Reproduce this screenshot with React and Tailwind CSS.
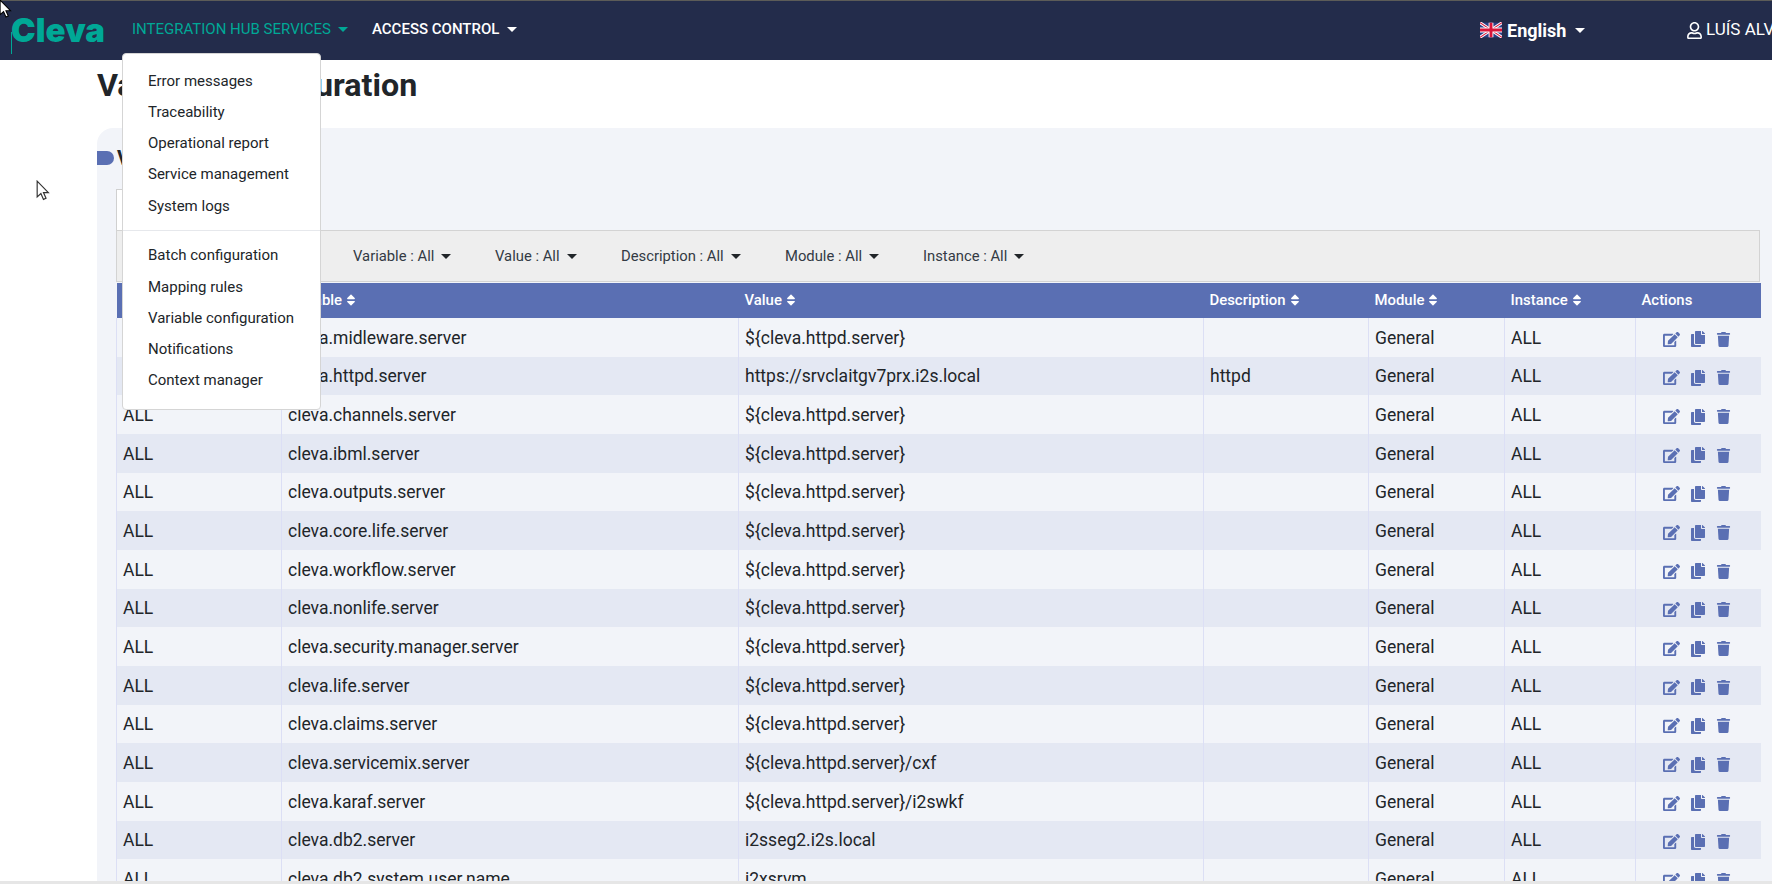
import React from 'react';
import { FaEdit, FaCopy, FaTrash, FaSort, FaRegUser } from 'react-icons/fa';

const httpd = '${cleva.httpd.server}';

const rows = [
  ['cleva.midleware.server', httpd, ''],
  ['cleva.httpd.server', 'https://srvclaitgv7prx.i2s.local', 'httpd'],
  ['cleva.channels.server', httpd, ''],
  ['cleva.ibml.server', httpd, ''],
  ['cleva.outputs.server', httpd, ''],
  ['cleva.core.life.server', httpd, ''],
  ['cleva.workflow.server', httpd, ''],
  ['cleva.nonlife.server', httpd, ''],
  ['cleva.security.manager.server', httpd, ''],
  ['cleva.life.server', httpd, ''],
  ['cleva.claims.server', httpd, ''],
  ['cleva.servicemix.server', httpd + '/cxf', ''],
  ['cleva.karaf.server', httpd + '/i2swkf', ''],
  ['cleva.db2.server', 'i2sseg2.i2s.local', ''],
  ['cleva.db2.system.user.name', 'i2xsrvm', ''],
];

const Caret = ({ className = 'border-t-white' }) => (
  <span className={`inline-block w-0 h-0 border-x-[5px] border-x-transparent border-t-[5px] ${className}`} />
);

const MenuItem = ({ children, className = 'h-[31px]' }) => (
  <div className={`flex items-center pl-[25px] text-[15px] text-[#212529] ${className}`}>{children}</div>
);

const Filter = ({ label, className }) => (
  <div className={`flex items-center gap-[7px] pt-[1px] text-[14.8px] text-[#333a44] ${className}`}>
    <span>{label} : All</span>
    <Caret className="border-t-[#212529]" />
  </div>
);

const Head = ({ label, sort = true }) => (
  <th className="px-[6px] text-left text-[14.9px] font-medium text-white">
    <span className="inline-flex items-center gap-[2px]">
      {label}
      {sort && <FaSort className="text-[14px]" />}
    </span>
  </th>
);

const Cell = ({ children }) => (
  <td className="px-[6px] pt-[1px] border-l border-[#dcdff5] text-[17.5px] text-[#212529] whitespace-nowrap">{children}</td>
);

const UkFlag = () => (
  <svg width="22" height="16" viewBox="0 0 60 40">
    <rect width="60" height="40" fill="#2b3f86" />
    <path d="M0 0L60 40M60 0L0 40" stroke="#fff" strokeWidth="8" />
    <path d="M0 0L60 40M60 0L0 40" stroke="#d8153a" strokeWidth="3" />
    <path d="M30 0V40M0 20H60" stroke="#fff" strokeWidth="13" />
    <path d="M30 0V40M0 20H60" stroke="#d8153a" strokeWidth="8" />
  </svg>
);

const Pointer = ({ className, fill, stroke, size }) => (
  <svg className={className} width={size} height={size * 1.5} viewBox="0 0 12 18">
    <path d="M1 1V14.5L4.2 11.6L6.4 16.6L8.6 15.6L6.4 10.8H10.6Z" fill={fill} stroke={stroke} strokeWidth="1" />
  </svg>
);

export default function App() {
  return (
    <div className="relative h-[884px] overflow-hidden bg-white font-['Roboto',sans-serif]">
      <nav className="flex h-[60px] items-center border-t border-[#5c5c58] bg-[#232c4b] pl-[11px] text-white whitespace-nowrap">
        <div className="flex w-[1469px] shrink-0 items-center">
          <div className="relative w-[121px] text-[33px] leading-none font-black text-[#00a896] font-['Inter',sans-serif]">
            Cleva
            <span className="absolute left-0 top-[18px] h-[22px] w-px bg-[#00a896]" />
          </div>
          <div className="flex items-center gap-[7px] pb-[3px] text-[15px] text-[#00a896]">
            <span>INTEGRATION HUB SERVICES</span>
            <Caret className="border-t-[#00a896]" />
          </div>
          <div className="ml-[24px] flex items-center gap-[8px] pb-[3px] text-[15px] font-medium">
            <span>ACCESS CONTROL</span>
            <Caret />
          </div>
        </div>
        <div className="flex w-[206px] shrink-0 items-center gap-[5px] pb-[1px]">
          <UkFlag />
          <span className="text-[18px] font-bold">English</span>
          <Caret className="ml-[4px] border-t-white" />
        </div>
        <div className="flex shrink-0 items-center gap-[3px] pb-[1px] text-[17px]">
          <FaRegUser className="text-[17px]" />
          <span>LUÍS ALVES</span>
        </div>
      </nav>

      <main className="pl-[97px]">
        <h1 className="h-[68px] pt-[7px] text-[32.2px] leading-[36px] font-bold text-[#212529]">Variable configuration</h1>
        <section className="h-[800px] rounded-tl-[16px] bg-[#f2f4f9] pt-[23px] pr-[12px]">
          <div className="flex h-[14px] items-center gap-[3px]">
            <span className="h-[14px] w-[17px] rounded-r-full bg-[#5a6fb3]" />
            <span className="text-[20px] font-bold text-[#212529]">Variables</span>
          </div>
          <div className="ml-[19px] mt-[24px]">
            <div className="h-[41px] w-[180px] border border-b-0 border-[#d0d0d0] bg-white" />
            <div className="flex h-[52px] items-center border border-[#d3d3d3] bg-[#eeeeee] pl-[236px]">
              <Filter label="Variable" className="w-[142px]" />
              <Filter label="Value" className="w-[126px]" />
              <Filter label="Description" className="w-[164px]" />
              <Filter label="Module" className="w-[138px]" />
              <Filter label="Instance" />
            </div>
            <table className="mt-px w-[1644px] table-fixed border-collapse">
              <colgroup>
                <col className="w-[165px]" />
                <col className="w-[457px]" />
                <col className="w-[465px]" />
                <col className="w-[165px]" />
                <col className="w-[136px]" />
                <col className="w-[131px]" />
                <col className="w-[125px]" />
              </colgroup>
              <thead>
                <tr className="h-[35px] bg-[#5a6fb3]">
                  <Head label="" sort={false} />
                  <Head label="Variable" />
                  <Head label="Value" />
                  <Head label="Description" />
                  <Head label="Module" />
                  <Head label="Instance" />
                  <Head label="Actions" sort={false} />
                </tr>
              </thead>
              <tbody>
                {rows.map((r, i) => (
                  <tr key={r[0]} className={`h-[38.67px] ${i % 2 ? 'bg-[#e4e8f3]' : 'bg-[#f2f4f9]'}`}>
                    <Cell>ALL</Cell>
                    <Cell>{r[0]}</Cell>
                    <Cell>{r[1]}</Cell>
                    <Cell>{r[2]}</Cell>
                    <Cell>General</Cell>
                    <Cell>ALL</Cell>
                    <Cell>
                      <div className="flex items-center gap-[10px] pl-[21px] pt-[3px] text-[17px] text-[#5a6fb3]">
                        <FaEdit />
                        <FaCopy className="text-[16px]" />
                        <FaTrash className="text-[15px]" />
                      </div>
                    </Cell>
                  </tr>
                ))}
              </tbody>
            </table>
          </div>
        </section>
      </main>

      {/* open menu */}
      <div className="absolute left-[122px] top-[53px] w-[199px] rounded-[4px] border border-[#d5d5d5] bg-white pt-[12px]">
        <MenuItem>Error messages</MenuItem>
        <MenuItem>Traceability</MenuItem>
        <MenuItem>Operational report</MenuItem>
        <MenuItem>Service management</MenuItem>
        <MenuItem className="h-[32px]">System logs</MenuItem>
        <div className="mt-[8px] mb-[8px] h-px bg-[#e6e8ec]" />
        <MenuItem className="h-[32px]">Batch configuration</MenuItem>
        <MenuItem className="h-[32px]">Mapping rules</MenuItem>
        <MenuItem>Variable configuration</MenuItem>
        <MenuItem>Notifications</MenuItem>
        <MenuItem className="h-[31px] mb-[13px]">Context manager</MenuItem>
      </div>

      <Pointer className="absolute -left-px -top-px" fill="#fff" stroke="#000" size={13} />
      <Pointer className="absolute left-[36px] top-[180px]" fill="#fff" stroke="#333" size={14} />
      <div className="absolute inset-x-0 bottom-0 h-[3px] bg-[#e6e6e6]" />
    </div>
  );
}
